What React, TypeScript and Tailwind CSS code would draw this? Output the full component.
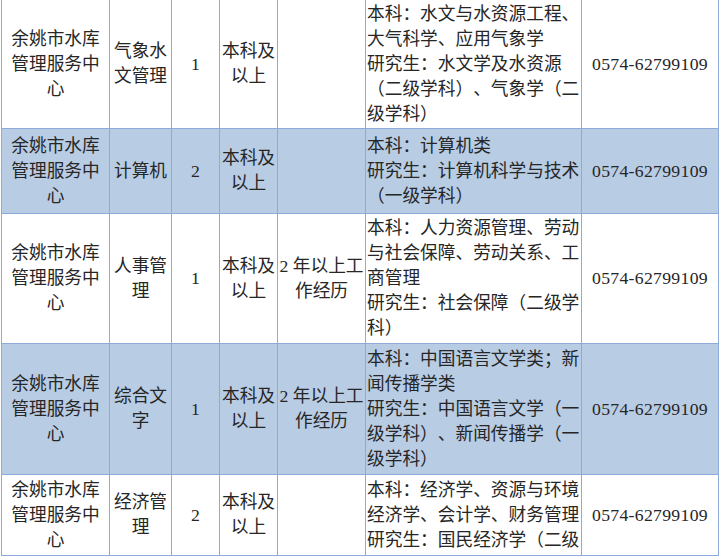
import React from "react";

type Row = {
  unit: string[];
  post: string[];
  count: string;
  edu: string[];
  exp: string[];
  major: string[];
  phone: string;
  shaded: boolean;
  h: string;
};

const unit = ["余姚市水库", "管理服务中", "心"];
const edu = ["本科及", "以上"];

const rows: Row[] = [
  {
    unit,
    post: ["气象水", "文管理"],
    count: "1",
    edu,
    exp: [],
    major: [
      "本科：水文与水资源工程、",
      "大气科学、应用气象学",
      "研究生：水文学及水资源",
      "（二级学科）、气象学（二",
      "级学科）",
    ],
    phone: "0574-62799109",
    shaded: false,
    h: "h-[129px]",
  },
  {
    unit,
    post: ["计算机"],
    count: "2",
    edu,
    exp: [],
    major: ["本科：计算机类", "研究生：计算机科学与技术", "（一级学科）"],
    phone: "0574-62799109",
    shaded: true,
    h: "h-[85px]",
  },
  {
    unit,
    post: ["人事管", "理"],
    count: "1",
    edu,
    exp: ["2 年以上工", "作经历"],
    major: [
      "本科：人力资源管理、劳动",
      "与社会保障、劳动关系、工",
      "商管理",
      "研究生：社会保障（二级学",
      "科）",
    ],
    phone: "0574-62799109",
    shaded: false,
    h: "h-[130px]",
  },
  {
    unit,
    post: ["综合文", "字"],
    count: "1",
    edu,
    exp: ["2 年以上工", "作经历"],
    major: [
      "本科：中国语言文学类；新",
      "闻传播学类",
      "研究生：中国语言文学（一",
      "级学科）、新闻传播学（一",
      "级学科）",
    ],
    phone: "0574-62799109",
    shaded: true,
    h: "h-[131px]",
  },
  {
    unit,
    post: ["经济管", "理"],
    count: "2",
    edu,
    exp: [],
    major: [
      "本科：经济学、资源与环境",
      "经济学、会计学、财务管理",
      "研究生：国民经济学（二级",
    ],
    phone: "0574-62799109",
    shaded: false,
    h: "h-[81px]",
  },
];

const Lines = ({ lines, left }: { lines: string[]; left?: boolean }) => (
  <div className={left ? "text-left" : "text-center"}>
    {lines.map((l, i) => (
      <div key={i} className="whitespace-nowrap">
        {l}
      </div>
    ))}
  </div>
);

const cell = "flex items-center justify-center border-r border-[#8eaadb] overflow-hidden";

export default function App() {
  return (
    <div className="w-[720px] h-[558px] overflow-hidden bg-white">
      <div
        className="ml-[1px] w-[718px] border-l border-[#8eaadb] text-[17.7px] leading-[25px] text-[#262626] [text-spacing-trim:space-all]"
        style={{ fontFamily: '"Liberation Serif", "Noto Sans CJK SC", serif' }}
      >
        {rows.map((r, i) => (
          <div
            key={i}
            className={`flex border-b border-[#8eaadb] ${r.h} ${r.shaded ? "bg-[#b8cce4]" : "bg-white"}`}
          >
            <div className={`${cell} w-[108px]`}>
              <Lines lines={r.unit} />
            </div>
            <div className={`${cell} w-[62px]`}>
              <Lines lines={r.post} />
            </div>
            <div className={`${cell} w-[48px]`}>{r.count}</div>
            <div className={`${cell} w-[58px]`}>
              <Lines lines={r.edu} />
            </div>
            <div className={`${cell} w-[88px]`}>
              <Lines lines={r.exp} />
            </div>
            <div className={`${cell} w-[216px] !justify-start pl-[1px]`}>
              <Lines lines={r.major} left />
            </div>
            <div className={`${cell} w-[137px] tracking-[0.3px]`}>{r.phone}</div>
          </div>
        ))}
      </div>
    </div>
  );
}
